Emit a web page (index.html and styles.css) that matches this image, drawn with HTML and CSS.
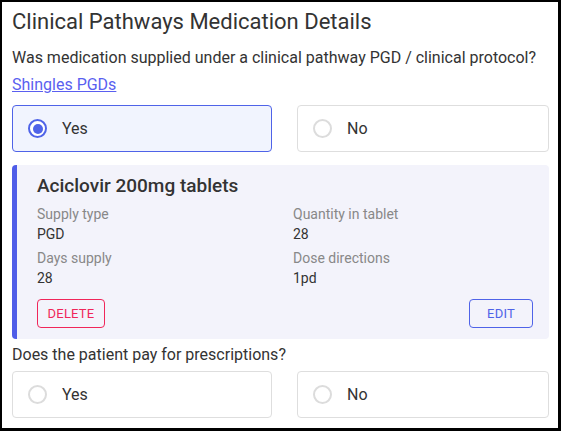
FILE: index.html
```html
<!DOCTYPE html>
<html>
<head>
<meta charset="utf-8">
<link rel="stylesheet" href="styles.css">
</head>
<body>
<div class="frame">
  <h1 class="title">Clinical Pathways Medication Details</h1>
  <p class="question">Was medication supplied under a clinical pathway PGD / clinical protocol?</p>
  <a class="link" href="#">Shingles PGDs</a>
  <div class="options options-top">
    <label class="option selected"><span class="radio checked"></span><span class="opt-label">Yes</span></label>
    <label class="option"><span class="radio"></span><span class="opt-label">No</span></label>
  </div>
  <div class="card">
    <div class="card-title">Aciclovir 200mg tablets</div>
    <div class="fields">
      <div class="field"><div class="f-label">Supply type</div><div class="f-value">PGD</div></div>
      <div class="field"><div class="f-label">Quantity in tablet</div><div class="f-value">28</div></div>
      <div class="field"><div class="f-label">Days supply</div><div class="f-value">28</div></div>
      <div class="field"><div class="f-label">Dose directions</div><div class="f-value">1pd</div></div>
    </div>
    <div class="actions">
      <button class="btn btn-delete">DELETE</button>
      <button class="btn btn-edit">EDIT</button>
    </div>
  </div>
  <p class="question2">Does the patient pay for prescriptions?</p>
  <div class="options options-bottom">
    <label class="option"><span class="radio"></span><span class="opt-label">Yes</span></label>
    <label class="option"><span class="radio"></span><span class="opt-label">No</span></label>
  </div>
</div>
</body>
</html>
```
FILE: styles.css
```css
html, body {
  margin: 0;
  padding: 0;
  background: #000;
}
body {
  width: 561px;
  height: 431px;
  overflow: hidden;
  font-family: Roboto, "Liberation Sans", sans-serif;
  color: #333333;
}
.frame {
  margin: 2px 3px 0 2px;
  height: 426px;
  background: #fff;
  padding: 7px 9px 0 10px;
  box-sizing: border-box;
  display: flex;
  flex-direction: column;
}
.title {
  margin: 0;
  font-size: 22px;
  line-height: 26px;
  font-weight: 400;
  color: #333;
}
.question {
  margin: 13px 0 0;
  font-size: 16px;
  line-height: 20px;
  color: #333;
}
.link {
  margin-top: 7px;
  align-self: flex-start;
  font-size: 16px;
  line-height: 20px;
  color: #5a5ff0;
  text-decoration: underline;
}
.options {
  display: grid;
  grid-template-columns: 260px 1fr;
  column-gap: 25px;
}
.options-top {
  margin-top: 10px;
}
.option {
  height: 47px;
  border: 1px solid #dedede;
  border-radius: 4px;
  box-sizing: border-box;
  display: flex;
  align-items: center;
  padding-left: 15px;
  background: #fff;
}
.option.selected {
  background: #f1f4fe;
  border-color: #4f63e8;
}
.radio {
  width: 19px;
  height: 19px;
  border: 2px solid #dcdcdc;
  border-radius: 50%;
  box-sizing: border-box;
  background: #fff;
  position: relative;
  flex: none;
}
.radio.checked {
  border-color: #4f63e8;
}
.radio.checked::after {
  content: "";
  position: absolute;
  left: 2.5px;
  top: 2.5px;
  width: 10px;
  height: 10px;
  border-radius: 50%;
  background: #4f63e8;
}
.opt-label {
  margin-left: 15px;
  font-size: 16px;
  color: #333;
}
.card {
  margin-top: 13px;
  background: #f3f3fb;
  border-left: 5px solid #4f5de8;
  border-radius: 4px;
  padding: 10px 16px 0 20px;
  box-sizing: border-box;
  height: 174px;
  flex: none;
}
.card-title {
  font-size: 19px;
  line-height: 22px;
  font-weight: 500;
  color: #333;
}
.fields {
  margin-top: 7px;
  display: grid;
  grid-template-columns: 256px 1fr;
  row-gap: 4px;
}
.f-label {
  font-size: 14px;
  line-height: 20px;
  color: #888;
}
.f-value {
  font-size: 14px;
  line-height: 20px;
  color: #333;
}
.actions {
  margin-top: 11px;
  display: flex;
  justify-content: space-between;
}
.btn {
  height: 29px;
  background: transparent;
  border-radius: 4px;
  font-family: Roboto, "Liberation Sans", sans-serif;
  font-size: 13px;
  font-weight: 400;
  letter-spacing: 0.2px;
  padding: 0;
  cursor: pointer;
}
.btn-delete {
  border: 1px solid #f0265a;
  color: #f0265a;
  width: 68px;
}
.btn-edit {
  border: 1px solid #4f63e8;
  color: #4f63e8;
  width: 64px;
}
.question2 {
  margin: 6px 0 0;
  font-size: 16px;
  line-height: 20px;
  color: #333;
}
.options-bottom {
  margin-top: 6px;
}
```
